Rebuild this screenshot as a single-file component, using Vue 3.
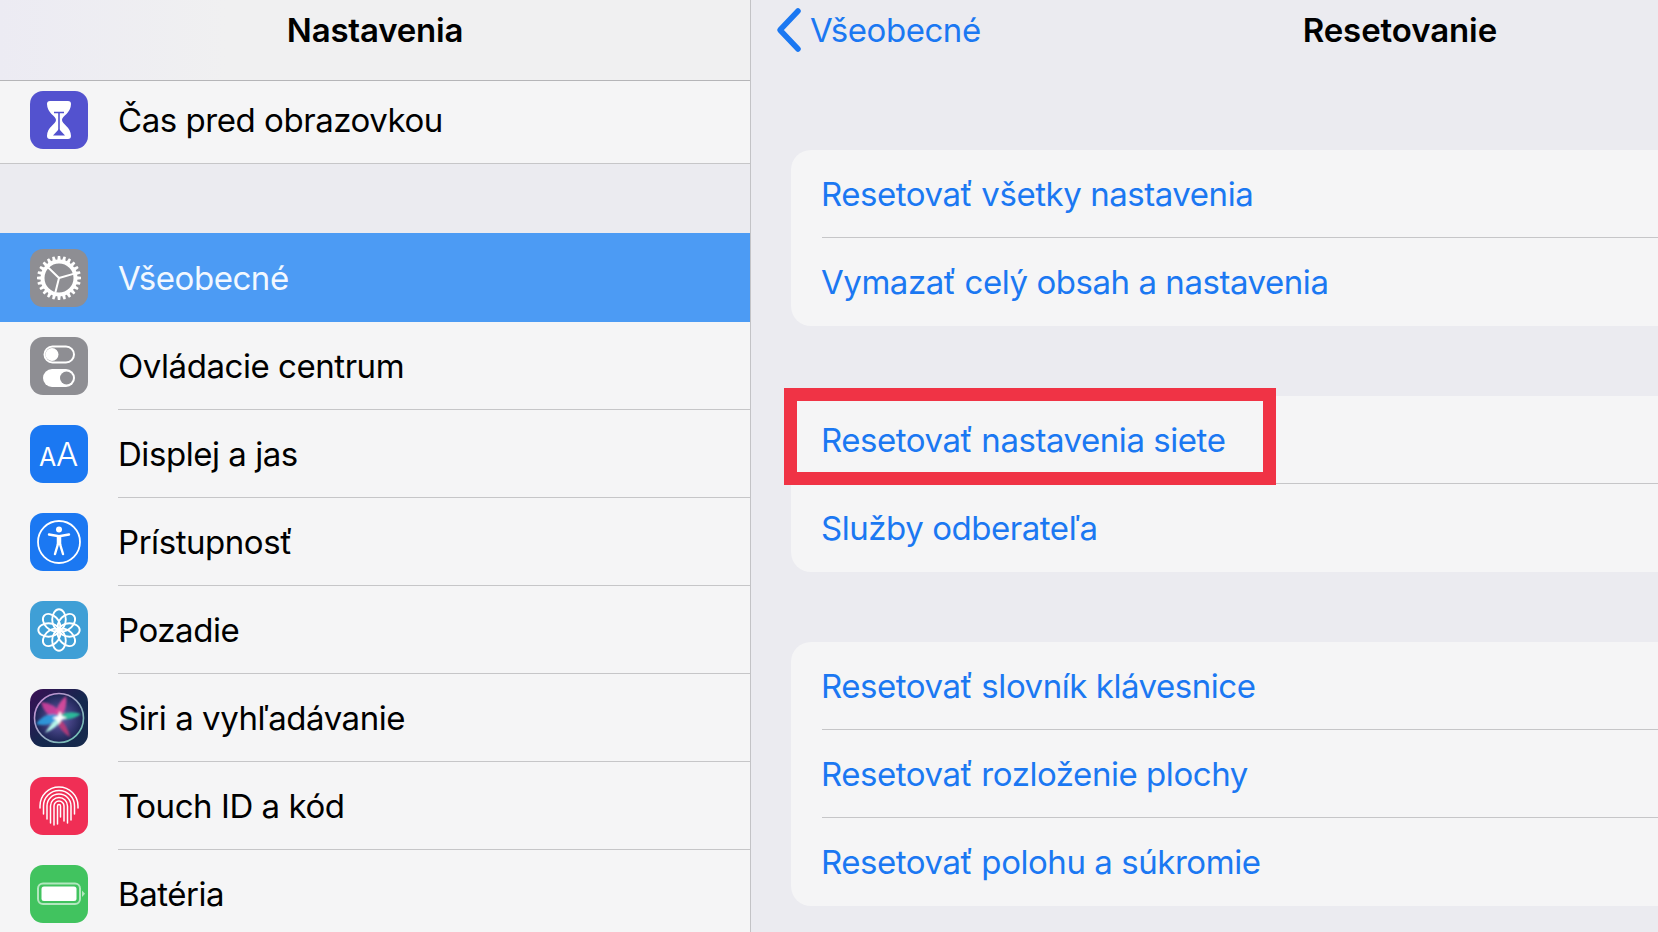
<template>
  <div class="screen">
    <aside class="sidebar">
      <header class="side-head">Nastavenia</header>
      <div class="row first">
        <span class="icon" style="background: #5352cf">
          <svg viewBox="0 0 58 58">
            <path fill="#fff" d="M20 10h18q3 0 3 3c0 9-9 12-9 16s9 7 9 16q0 3-3 3H20q-3 0-3-3c0-9 9-12 9-16s-9-7-9-16q0-3 3-3z" />
            <path fill="none" stroke="#5352cf" stroke-width="1.6" d="M24 21.5h10M29 21.5v21" />
            <path fill="#5352cf" d="M29 38l6 6.5H23z" />
          </svg>
        </span>
        <span class="label">Čas pred obrazovkou</span>
      </div>
      <div class="gap"></div>
      <div class="row selected">
        <span class="icon" style="background: #8e8e93">
          <svg viewBox="0 0 58 58">
            <path v-for="t in teeth" :key="t" d="M27.3 11.5l.5-4.500h2.400l.5 4.500z" fill="#fff" :transform="`rotate(${t} 29 29)`" />
            <circle cx="29" cy="29" r="16.500" fill="none" stroke="#fff" stroke-width="4" />
            <path transform="rotate(14 29 29)" fill="none" stroke="#fff" stroke-width="2" d="M29 29V44M29 29L16 21.500M29 29L42 21.500" />
          </svg>
        </span>
        <span class="label">Všeobecné</span>
      </div>
      <div class="row">
        <span class="icon" style="background: #8e8e93">
          <svg viewBox="0 0 58 58">
            <rect x="14.500" y="9.500" width="29.500" height="16" rx="8" fill="none" stroke="#fff" stroke-width="2" />
            <circle cx="22" cy="17.500" r="6.500" fill="#fff" />
            <rect x="13" y="32" width="32" height="18" rx="9" fill="#fff" />
            <circle cx="36.500" cy="41" r="6.500" fill="#8e8e93" />
          </svg>
        </span>
        <span class="label">Ovládacie centrum</span>
        <i class="sep"></i>
      </div>
      <div class="row">
        <span class="icon" style="background: #1b78f2">
          <svg viewBox="0 0 58 58">
            <text x="9" y="41" class="aa small">A</text>
            <text x="26" y="41" class="aa big">A</text>
          </svg>
        </span>
        <span class="label">Displej a jas</span>
        <i class="sep"></i>
      </div>
      <div class="row">
        <span class="icon" style="background: #1b78f2">
          <svg viewBox="0 0 58 58">
            <circle cx="29" cy="29" r="21" fill="none" stroke="#fff" stroke-width="1.800" />
            <circle cx="29" cy="16.500" r="3" fill="#fff" />
            <g fill="none" stroke="#fff" stroke-linecap="round">
              <path stroke-width="2.400" d="M19 21.500l10 1.800 10-1.800" />
              <path stroke-width="4.500" stroke-linecap="butt" d="M29 23v9" />
              <path stroke-width="2.400" d="M28 31l-3 10M30 31l3 10" />
            </g>
          </svg>
        </span>
        <span class="label">Prístupnosť</span>
        <i class="sep"></i>
      </div>
      <div class="row">
        <span class="icon" style="background: #3f9fd6">
          <svg viewBox="0 0 58 58">
            <ellipse v-for="p in petals" :key="p" cx="29" cy="18.500" rx="6.800" ry="10.200" fill="none" stroke="#fff" stroke-width="1.900" :transform="`rotate(${p} 29 29)`" />
            <circle cx="29" cy="29" r="3" fill="#fff" />
          </svg>
        </span>
        <span class="label">Pozadie</span>
        <i class="sep"></i>
      </div>
      <div class="row">
        <span class="icon" style="background: linear-gradient(135deg, #3a0f55, #14284e 55%, #172a4c)">
          <svg viewBox="0 0 58 58">
            <defs>
              <linearGradient id="siriRing" x1="0" y1="0" x2="1" y2="1">
                <stop offset="0" stop-color="#d08ad8" />
                <stop offset="1" stop-color="#68c8b0" />
              </linearGradient>
              <radialGradient id="siriGlow">
                <stop offset="0" stop-color="#6a5fb0" />
                <stop offset="1" stop-color="#1c2454" />
              </radialGradient>
              <filter id="siriSoft" x="-20%" y="-20%" width="140%" height="140%">
                <feGaussianBlur stdDeviation="1" />
              </filter>
            </defs>
            <circle cx="29" cy="29" r="24.500" fill="url(#siriGlow)" stroke="url(#siriRing)" stroke-width="1.600" />
            <g filter="url(#siriSoft)">
              <path fill="#d93f9f" opacity=".85" d="M11 13q14 1 21 13-2 5-6 3Q14 26 11 13z" />
              <path fill="#e04a9c" opacity=".9" d="M31 29q7-12 5-22-10 8-11 21z" />
              <path fill="#c43a78" opacity=".85" d="M28 28q9 7 12 20Q30 42 26 31z" />
              <path fill="#27c79c" opacity=".9" d="M30 26q10-5 21-1-9 7-21 5z" />
              <path fill="#2f9fe2" opacity=".9" d="M6 35q10-14 25-8-10 12-25 8z" />
              <path fill="#b5f7ea" d="M31 26Q21 34 15 44q12-5 18-15z" />
              <path fill="#fff" d="M30 22l2 5 5 2-6 2-2 4-2-4-5-2 6-2z" />
            </g>
          </svg>
        </span>
        <span class="label">Siri a vyhľadávanie</span>
        <i class="sep"></i>
      </div>
      <div class="row">
        <span class="icon" style="background: #f02e55">
          <svg viewBox="0 0 58 58">
            <g fill="none" stroke="#fff" stroke-width="1.500" stroke-linecap="round">
              <path v-for="a in arches" :key="a.r" :d="archPath(a)" />
            </g>
          </svg>
        </span>
        <span class="label">Touch ID a kód</span>
        <i class="sep"></i>
      </div>
      <div class="row">
        <span class="icon" style="background: #41c35f">
          <svg viewBox="0 0 58 58">
            <rect x="8" y="18.500" width="42" height="20.500" rx="5" fill="none" stroke="#fff" stroke-opacity=".6" stroke-width="2" />
            <rect x="11.500" y="21.500" width="35" height="14.500" rx="2.500" fill="#fff" />
            <path fill="#fff" fill-opacity=".6" d="M52 25.500l3 3.200-3 3.200z" />
          </svg>
        </span>
        <span class="label">Batéria</span>
        <i class="sep"></i>
      </div>
    </aside>

    <main class="pane">
      <header class="pane-head">
        <svg class="chevron" viewBox="0 0 26 46">
          <path d="M22 4L4 23l18 19" fill="none" stroke="#1b78f2" stroke-width="5.500" stroke-linecap="round" stroke-linejoin="round" />
        </svg>
        <span class="back">Všeobecné</span>
        <span class="title">Resetovanie</span>
      </header>

      <section v-for="(group, i) in groups" :key="i" class="card">
        <div v-for="item in group" :key="item" class="action">
          <span>{{ item }}</span>
          <i class="action-sep"></i>
        </div>
      </section>

      <div class="highlight"></div>
    </main>
  </div>
</template>

<script setup>
const teeth = Array.from({ length: 24 }, (_, i) => i * 15)
const petals = Array.from({ length: 8 }, (_, i) => i * 45)

// fingerprint ridges: concentric arches, each with its own leg length
const arches = [
  { r: 19, left: 31, right: 31 },
  { r: 15.5, left: 37, right: 37 },
  { r: 12, left: 42, right: 43 },
  { r: 8.5, left: 46, right: 46 },
  { r: 5, left: 48, right: 44 },
  { r: 1.5, left: 47, right: 40 },
]

const archPath = ({ r, left, right }) =>
  `M${29 - r} ${left}V29A${r} ${r} 0 0 1 ${29 + r} 29V${right}`

const groups = [
  ['Resetovať všetky nastavenia', 'Vymazať celý obsah a nastavenia'],
  ['Resetovať nastavenia siete', 'Služby odberateľa'],
  ['Resetovať slovník klávesnice', 'Resetovať rozloženie plochy', 'Resetovať polohu a súkromie'],
]
</script>

<style>
html,
body {
  margin: 0;
  overflow: hidden;
}
</style>

<style scoped>
.screen {
  display: flex;
  width: 1658px;
  height: 932px;
  overflow: hidden;
  font-family: Inter, "Liberation Sans", sans-serif;
  font-size: 33px;
  letter-spacing: -0.45px;
  color: #000;
  background: #ebebf0;
}

.sidebar {
  flex: 0 0 750px;
  border-right: 1px solid #c3c3c6;
  background: #f5f5f6;
}

.side-head {
  height: 81px;
  padding-bottom: 21px;
  box-sizing: border-box;
  display: flex;
  align-items: center;
  justify-content: center;
  border-bottom: 1px solid #b5b5b8;
  font-weight: 600;
  letter-spacing: -0.2px;
  background: linear-gradient(90deg, #ecebf3, #f0f0f1 30%);
}

.row {
  position: relative;
  display: flex;
  align-items: center;
  gap: 30px;
  height: 88px;
  padding-left: 30px;
}

.row.first {
  height: 83px;
  padding-bottom: 4px;
  box-sizing: border-box;
  border-bottom: 1px solid #c6c6c8;
}

.row.selected {
  height: 89px;
  background: #4c9bf4;
  color: #f2f8ff;
}

.gap {
  height: 69px;
  background: #ebebf0;
}

.sep {
  position: absolute;
  left: 118px;
  right: 0;
  bottom: 0;
  height: 1px;
  background: #c6c6c8;
}

.icon {
  flex: none;
  width: 58px;
  height: 58px;
  border-radius: 13px;
  overflow: hidden;
}

.icon svg {
  display: block;
  width: 58px;
  height: 58px;
}

.aa {
  fill: #fff;
  font-family: Inter, sans-serif;
  letter-spacing: 0;
}

.aa.small {
  font-size: 25px;
}

.aa.big {
  font-size: 33px;
  font-weight: 300;
}

.pane {
  position: relative;
  flex: 1;
  min-width: 0;
  padding-left: 40px;
}

.pane-head {
  display: flex;
  align-items: center;
  height: 60px;
  margin-left: -15px;
  margin-bottom: 90px;
}

.chevron {
  width: 26px;
  height: 46px;
  margin-right: 8px;
}

.back {
  color: #1b78f2;
}

.title {
  margin-left: 322px;
  font-weight: 600;
  letter-spacing: -0.1px;
}

.card {
  margin-bottom: 70px;
  border-radius: 20px 0 0 20px;
  background: #f5f5f6;
  overflow: hidden;
}

.action {
  position: relative;
  display: flex;
  align-items: center;
  height: 88px;
  padding-left: 30px;
  color: #1b78f2;
}

.action-sep {
  position: absolute;
  left: 31px;
  right: 0;
  bottom: 0;
  height: 1px;
  background: #c6c6c8;
}

.action:last-child .action-sep {
  display: none;
}

/* red annotation drawn over the list */
.highlight {
  position: absolute;
  left: 33px;
  top: 388px;
  width: 466px;
  height: 71px;
  border: 13px solid #f03345;
}
</style>
